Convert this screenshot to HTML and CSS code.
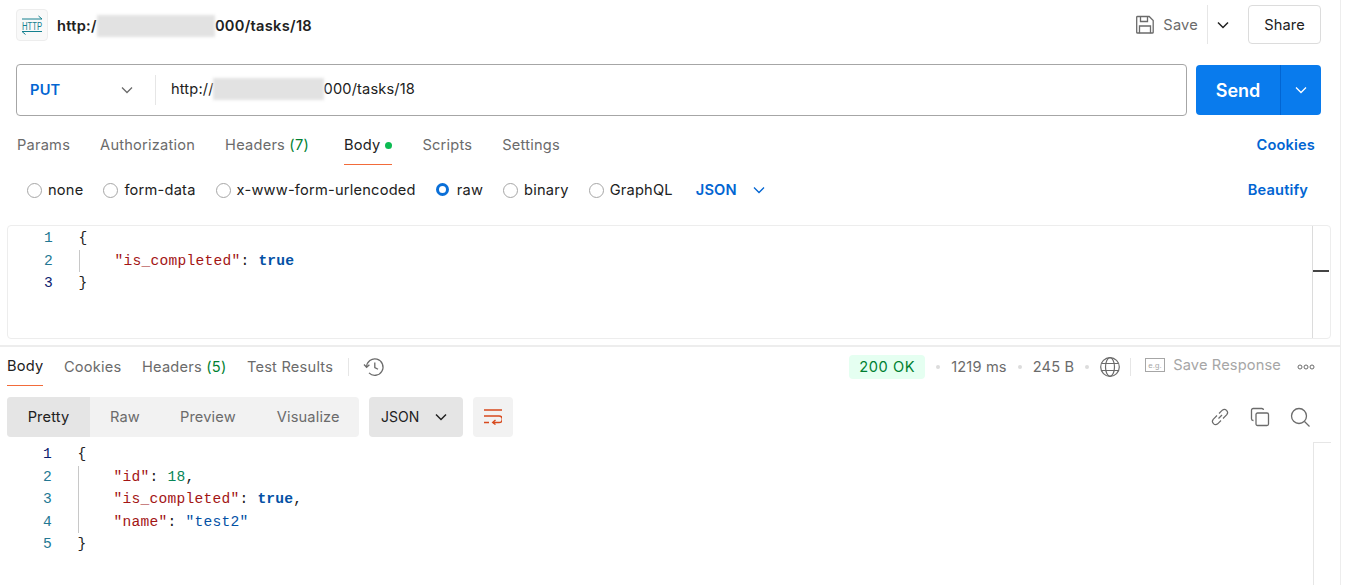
FILE: index.html
```html
<!DOCTYPE html>
<html lang="en">
<head>
<meta charset="utf-8">
<title>PUT tasks</title>
<link rel="stylesheet" href="styles.css">
</head>
<body>
<div class="app">
  <header class="head">
    <div class="http-icon">
      <svg width="22" height="22" viewBox="0 0 22 22" fill="none" stroke="#14808f" stroke-width="1"><path d="M1 5h20M17.500 2l3.500 3M1 17.500h20M1 17.500l3.500 3"/><text transform="translate(11 15.500) scale(.7 1)" text-anchor="middle" class="http-text">HTTP</text></svg>
    </div>
    <div class="title">http:/<span class="blur title-blur"></span>000/tasks/18</div>
    <div class="save">
      <svg width="20" height="20" viewBox="0 0 20 20" fill="none" stroke="#6b6b6b" stroke-width="1.3"><path d="M1.7 2.2a.8.8 0 0 1 .8-.7h11.7l4 4v11.8a.8.8 0 0 1-.8.7H2.500a.8.8 0 0 1-.8-.7z"/><path d="M5.500 1.700v4.800h7V1.700M4.500 18.200v-7.200h11v7.200"/></svg>
      <span>Save</span>
    </div>
    <div class="save-more">
      <svg width="12" height="8" viewBox="0 0 12 8" fill="none" stroke="#212121" stroke-width="1.500"><path d="M1 1.500l5 5 5-5"/></svg>
    </div>
    <button class="share">Share</button>
  </header>

  <section class="url-row">
    <div class="url-box">
      <div class="method">
        <span>PUT</span>
        <svg width="12" height="8" viewBox="0 0 12 8" fill="none" stroke="#6b6b6b" stroke-width="1.300"><path d="M1 1.500l5 5 5-5"/></svg>
      </div>
      <div class="url-text">http://<span class="blur url-blur"></span>000/tasks/18</div>
    </div>
    <div class="send">
      <span class="send-label">Send</span>
      <span class="send-more"><svg width="12" height="8" viewBox="0 0 12 8" fill="none" stroke="#fff" stroke-width="1.300"><path d="M1 1.500l5 5 5-5"/></svg></span>
    </div>
  </section>

  <nav class="tabs">
    <span class="tab">Params</span>
    <span class="tab">Authorization</span>
    <span class="tab tab-wide">Headers <em class="count">(7)</em></span>
    <span class="tab tab-on">Body<i class="dot"></i></span>
    <span class="tab">Scripts</span>
    <span class="tab">Settings</span>
    <span class="link cookies">Cookies</span>
  </nav>

  <div class="radios">
    <label class="radio"><i class="circle"></i>none</label>
    <label class="radio"><i class="circle"></i>form-data</label>
    <label class="radio"><i class="circle"></i>x-www-form-urlencoded</label>
    <label class="radio"><i class="circle circle-on"></i>raw</label>
    <label class="radio"><i class="circle"></i>binary</label>
    <label class="radio"><i class="circle"></i>GraphQL</label>
    <span class="link json-pick">JSON
      <svg width="12" height="8" viewBox="0 0 12 8" fill="none" stroke="#0265d2" stroke-width="1.300"><path d="M1 1.500l5 5 5-5"/></svg>
    </span>
    <span class="link beautify">Beautify</span>
  </div>

  <div class="editor">
    <div class="code">
      <div class="line"><span class="num">1</span><span>{</span></div>
      <div class="line"><span class="num">2</span><span class="guide"></span><span class="key">"is_completed"</span><span>: </span><span class="bool">true</span></div>
      <div class="line"><span class="num num-on">3</span><span>}</span></div>
    </div>
    <div class="minimap"><i class="marker"></i></div>
  </div>

  <div class="split"></div>

  <nav class="res-tabs">
    <span class="res-tab res-tab-on">Body</span>
    <span class="res-tab">Cookies</span>
    <span class="res-tab">Headers <em class="count">(5)</em></span>
    <span class="res-tab">Test Results</span>
    <i class="vsep"></i>
    <svg class="history" width="22" height="20" viewBox="0 0 22 20" fill="none" stroke="#6b6b6b" stroke-width="1.300"><path d="M3.600 10a8.200 8.200 0 1 1 2.400 5.900"/><path d="M1 7.500l2.600 2.800 2.800-2.500"/><path d="M11.800 5.500v5l3.200 1.800"/></svg>
    <div class="res-meta">
      <span class="status">200 OK</span>
      <i class="sep-dot"></i>
      <span>1219 ms</span>
      <i class="sep-dot"></i>
      <span>245 B</span>
      <i class="sep-dot"></i>
      <svg width="20" height="20" viewBox="0 0 20 20" fill="none" stroke="#6b6b6b" stroke-width="1.200"><circle cx="10" cy="10" r="9.300"/><ellipse cx="10" cy="10" rx="4.500" ry="9.300"/><path d="M1.800 6.500h16.400M1.800 13.500h16.400"/></svg>
      <i class="vsep meta-sep"></i>
      <span class="save-res">
        <svg width="20" height="14" viewBox="0 0 20 14" fill="none" stroke="#a6a6a6"><rect x=".5" y=".5" width="19" height="13"/><text x="10" y="10" text-anchor="middle" class="eg">e.g.</text></svg>
        Save Response
      </span>
      <svg class="more" width="18" height="6" viewBox="0 0 18 6" fill="none" stroke="#6b6b6b"><circle cx="3" cy="3" r="2"/><circle cx="9" cy="3" r="2"/><circle cx="15" cy="3" r="2"/></svg>
    </div>
  </nav>

  <div class="toolbar">
    <div class="segment">
      <span class="seg seg-on">Pretty</span>
      <span class="seg seg-raw">Raw</span>
      <span class="seg seg-preview">Preview</span>
      <span class="seg seg-vis">Visualize</span>
    </div>
    <div class="format"><span class="format-label">JSON</span>
      <svg width="12" height="8" viewBox="0 0 12 8" fill="none" stroke="#212121" stroke-width="1.500"><path d="M1 1.500l5 5 5-5"/></svg>
    </div>
    <div class="wrap">
      <svg width="18" height="16" viewBox="0 0 18 16" fill="none" stroke="#d84a1e" stroke-width="1.400"><path d="M0 1h18M0 7h15a2.800 2.800 0 0 1 0 6.500H9"/><path d="M11.500 11l-2.800 2.500 2.800 2M0 13.500h5"/></svg>
    </div>
    <div class="tool-icons">
      <svg width="20" height="20" viewBox="0 0 20 20" fill="none" stroke="#6b6b6b" stroke-width="1.200"><path d="M8.500 11.500l3.500-3.500"/><path d="M7 8.500l-3.800 3.800a3.200 3.200 0 0 0 4.500 4.500l3.300-3.300"/><path d="M9 6.500l3.300-3.300a3.200 3.200 0 0 1 4.500 4.500L13 11.500"/></svg>
      <svg width="20" height="20" viewBox="0 0 20 20" fill="none" stroke="#6b6b6b" stroke-width="1.300"><rect x="6" y="6" width="12.500" height="12.500" rx="1.500"/><path d="M3.500 13.500h-.3a1.700 1.700 0 0 1-1.700-1.700V3.200a1.700 1.700 0 0 1 1.700-1.700h8.600a1.700 1.700 0 0 1 1.700 1.500"/></svg>
      <svg width="20" height="20" viewBox="0 0 20 20" fill="none" stroke="#6b6b6b" stroke-width="1.300"><circle cx="9" cy="9" r="7.500"/><path d="M14.500 14.500l5 5"/></svg>
    </div>
  </div>

  <div class="result">
    <div class="code">
      <div class="line"><span class="num num-on">1</span><span>{</span></div>
      <div class="line"><span class="num">2</span><span class="guide"></span><span class="key">"id"</span><span>: </span><span class="number">18</span><span>,</span></div>
      <div class="line"><span class="num">3</span><span class="guide"></span><span class="key">"is_completed"</span><span>: </span><span class="bool">true</span><span>,</span></div>
      <div class="line"><span class="num">4</span><span class="guide"></span><span class="key">"name"</span><span>: </span><span class="string">"test2"</span></div>
      <div class="line"><span class="num">5</span><span>}</span></div>
    </div>
    <div class="scroll-track"></div>
  </div>
</div>
</body>
</html>
```
FILE: styles.css
```css
* { box-sizing: border-box; }
html, body { margin: 0; padding: 0; background: #fff; }
body { font-family: Inter, "Liberation Sans", sans-serif; font-size: 14.625px; letter-spacing: .22px; color: #212121; overflow: hidden; }
.app { width: 1341px; height: 585px; border-right: 1px solid #ededed; overflow: hidden; }
em, i { font-style: normal; }

.head { display: flex; align-items: center; height: 50px; padding: 0 19px 0 16px; }
.http-icon { width: 32px; height: 32px; display: flex; align-items: center; justify-content: center; background: #f9f9f9; border: 1px solid #ededed; border-radius: 4px; }
.http-text { font: 11px "Liberation Sans", sans-serif; fill: #14808f; stroke: none; letter-spacing: 0; }
.title { margin-left: 9px; font-weight: 600; letter-spacing: .3px; display: flex; align-items: center; margin-top: 1px; }
.blur { display: inline-block; background: #e2e2e2; filter: blur(1.5px); }
.title-blur { width: 118px; height: 22px; }
.save { margin-left: auto; margin-bottom: 1px; display: flex; align-items: center; gap: 8px; color: #6b6b6b; }
.save-more { width: 30px; height: 39px; margin: 0 11px 1px 9px; border-left: 1px solid #e6e6e6; display: flex; align-items: center; justify-content: center; }
.share { width: 73px; height: 39px; margin-bottom: 1px; background: #fff; border: 1px solid #dcdcdc; border-radius: 4px; font: 14.625px Inter, sans-serif; letter-spacing: .15px; color: #212121; }

.url-row { display: flex; align-items: center; height: 52px; margin: 14px 19px 0 16px; gap: 9px; }
.url-box { flex: 1; height: 52px; display: flex; align-items: center; border: 1px solid #a6a6a6; border-radius: 4px; }
.method { width: 139px; height: 30px; padding: 0 22px 0 13px; display: flex; align-items: center; justify-content: space-between; border-right: 1px solid #e6e6e6; color: #0265d2; font-weight: 600; }
.url-text { margin-left: 15px; margin-top: -2px; display: flex; align-items: center; color: #212121; letter-spacing: .15px; }
.url-blur { width: 111px; height: 22px; margin-left: -1px; }
.send { width: 125px; height: 50px; display: flex; background: #097bed; border-radius: 4px; color: #fff; }
.send-label { flex: 1; display: flex; align-items: center; justify-content: center; font-size: 18px; font-weight: 600; letter-spacing: 0; border-right: 1px solid #0265d2; }
.send-more { width: 40px; display: flex; align-items: center; justify-content: center; }

.tabs { display: flex; height: 49px; padding: 10px 25px 0 17px; gap: 30px; color: #6b6b6b; }
.tab { height: 39px; padding-bottom: 2px; display: flex; align-items: center; white-space: pre; }
.tab-wide { margin-right: 5px; }
.tab-on { color: #212121; border-bottom: 1px solid #f26b3a; padding-bottom: 1px; }
.count { color: #007f31; }
.dot { width: 7px; height: 7px; border-radius: 50%; background: #0cbb52; margin-left: 5px; margin-top: 1px; }
.link { color: #0265d2; font-weight: 600; letter-spacing: .15px; }
.cookies { margin-left: auto; align-self: center; margin-bottom: 2px; }

.radios { display: flex; align-items: center; gap: 20px; height: 50px; padding: 0 32px 0 27px; color: #212121; margin-bottom: 10px; }
.radio { display: flex; align-items: center; }
.circle { width: 15px; height: 15px; border: 1px solid #a6a6a6; border-radius: 50%; margin-right: 6px; }
.circle-on { width: 13px; height: 13px; border: 3.500px solid #0a6fd8; margin-right: 8px; margin-top: -2px; }
.json-pick { display: flex; align-items: center; gap: 16px; margin-left: 3px; margin-top: -1px; }
.beautify { margin-left: auto; }

.editor { display: flex; height: 114px; margin: 0 9px 0 7px; border: 1px solid #ededed; border-radius: 4px; }
.code { flex: 1; padding-top: 1px; font: 14.625px/22.500px "Liberation Mono", monospace; letter-spacing: .225px; color: #212121; }
.line { display: flex; height: 22.500px; white-space: pre; }
.num { width: 45px; margin-right: 25.500px; text-align: right; color: #237893; }
.num-on { color: #0b216f; }
.guide { width: 36px; border-left: 1px solid #c8c8c8; }
.key { color: #a31515; }
.bool { color: #0451a5; font-weight: 700; }
.number { color: #098658; }
.string { color: #0451a5; }
.minimap { width: 18px; border-left: 1px solid #dcdcdc; position: relative; }
.marker { position: absolute; left: 0; right: 1px; top: 44px; height: 2px; background: #444; }

.split { height: 2px; margin-top: 6px; margin-right: -1px; background: #ededed; }

.res-tabs { display: flex; align-items: center; height: 39px; padding: 0 25px 0 7px; gap: 20.500px; color: #6b6b6b; }
.res-tab { height: 39px; display: flex; align-items: center; white-space: pre; }
.res-tab-on { color: #212121; border-bottom: 1px solid #f26b3a; }
.vsep { width: 1px; height: 18px; background: #e6e6e6; margin-left: -6px; }
.history { margin-left: -6px; }
.res-meta { margin-left: auto; display: flex; align-items: center; gap: 9px; letter-spacing: .15px; }
.status { width: 76px; height: 24px; display: flex; align-items: center; justify-content: center; background: #e5fff1; color: #007f31; border-radius: 4px; letter-spacing: .6px; }
.sep-dot { width: 4px; height: 4px; margin: 0 2px; border-radius: 50%; background: #dcdcdc; }
.meta-sep { margin: 0 5px 0 1px; }
.save-res { display: flex; align-items: center; gap: 8px; color: #a6a6a6; margin-top: -4px; }
.eg { font: 8px "Liberation Sans", sans-serif; fill: #a6a6a6; stroke: none; letter-spacing: 0; }
.more { margin-left: 7px; }

.toolbar { display: flex; align-items: center; height: 40px; margin-top: 11px; padding: 0 30px 0 7px; }
.segment { width: 352px; height: 40px; display: flex; background: #f2f2f2; border-radius: 4px; overflow: hidden; color: #6b6b6b; letter-spacing: .15px; }
.seg { display: flex; align-items: center; padding-bottom: 1px; }
.seg-on { width: 83px; justify-content: center; background: #e5e5e5; color: #212121; }
.seg-raw { margin-left: 20px; }
.seg-preview { margin-left: 40px; }
.seg-vis { margin-left: 41px; }
.format { width: 94px; height: 40px; margin-left: 10px; padding: 0 16px 0 12px; display: flex; align-items: center; justify-content: space-between; background: #e5e5e5; border-radius: 4px; }
.format-label { font-size: 14px; letter-spacing: 0; margin-top: -2px; }
.wrap { width: 40px; height: 40px; margin-left: 10px; display: flex; align-items: center; justify-content: center; background: #f2f2f2; border-radius: 4px; }
.tool-icons { margin-left: auto; display: flex; gap: 20px; }

.result { display: flex; height: 143px; margin: 5px 9px 0 7px; }
.scroll-track { width: 18px; border-left: 1px solid #e6e6e6; border-top: 1px solid #e6e6e6; }
```
